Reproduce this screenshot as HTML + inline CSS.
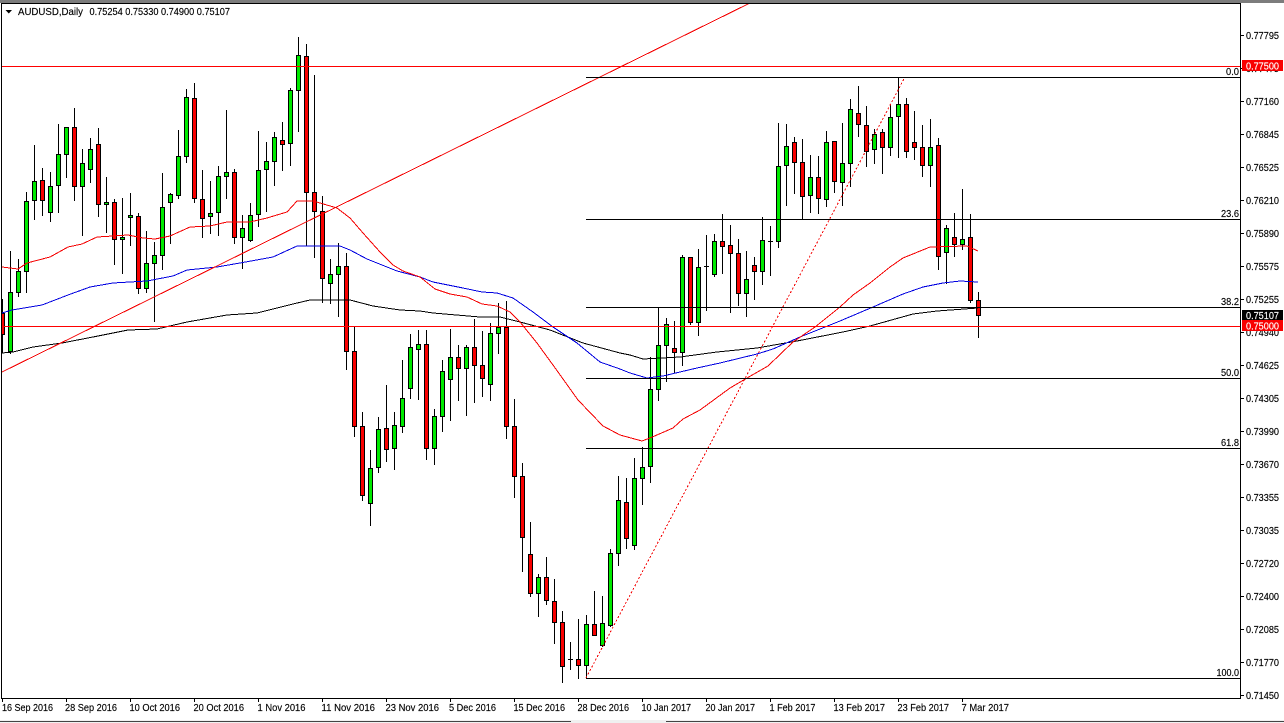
<!DOCTYPE html>
<html><head><meta charset="utf-8"><title>AUDUSD,Daily</title>
<style>html,body{margin:0;padding:0;background:#fff;width:1284px;height:723px;overflow:hidden}svg{display:block}text{font-family:"Liberation Sans",sans-serif;font-size:10.5px;fill:#000;stroke:#000;stroke-width:.15}text.w{fill:#fff;stroke:#fff}</style></head>
<body>
<svg width="1284" height="723" viewBox="0 0 1284 723" xmlns="http://www.w3.org/2000/svg">
<defs><clipPath id="c"><rect x="2" y="4" width="1238" height="694"/></clipPath></defs>
<rect width="1284" height="723" fill="#fff"/>
<rect width="1284" height="3" fill="#7c7c7c"/>
<rect y="720" width="1284" height="3" fill="#f0f0f0"/>
<rect y="721" width="571" height="1" fill="#444"/>
<rect x="666" y="721" width="618" height="1" fill="#444"/>
<g clip-path="url(#c)" shape-rendering="crispEdges">
<path fill="none" stroke="#000" d="M2.5 299V353M10.5 251V354M18.5 259V297M26.5 192V293M34.5 145V220M42.5 168V216M50.5 172V222M58.5 124V213M66.5 127V178M74.5 108V201M82.5 149V236M90.5 138V183M98.5 128V217M106.5 177V233M114.5 199V265M122.5 198V274M130.5 193V246M138.5 213V294M146.5 231V293M154.5 242V322M162.5 173V270M170.5 193V244M178.5 130V199M186.5 89V163M194.5 83V203M202.5 170V238M210.5 181V234M218.5 166V236M226.5 110V199M234.5 169V244M242.5 215V269M250.5 203V242M258.5 131V227M266.5 142V212M274.5 132V186M282.5 122V171M290.5 88V166M298.5 37V132M306.5 44V246M314.5 75V258M322.5 196V303M330.5 259V304M338.5 243V317M346.5 253V370M354.5 327V437M362.5 412V501M370.5 450V526M378.5 417V473M386.5 385V462M394.5 412V470M402.5 360V433M410.5 334V399M418.5 330V400M426.5 330V460M434.5 409V465M442.5 360V432M450.5 329V421M458.5 345V401M466.5 345V416M474.5 319V403M482.5 331V397M490.5 323V401M498.5 303V354M506.5 301V439M514.5 399V498M522.5 463V572M530.5 522V597M538.5 574V617M546.5 557V605M554.5 579V644M562.5 611V683M570.5 642V670M578.5 619V679M586.5 615V679M594.5 591V636M602.5 596V647M610.5 549V627M618.5 476V566M626.5 478V549M634.5 458V550M642.5 447V505M650.5 357V483M658.5 307V401M666.5 318V382M674.5 321V373M682.5 255V366M690.5 257V325M698.5 249V336M706.5 235V311M714.5 234V277M722.5 214V274M730.5 225V313M738.5 239V306M746.5 251V317M754.5 257V300M762.5 217V285M770.5 226V276M778.5 123V248M786.5 124V206M794.5 137V194M802.5 139V219M810.5 155V213M818.5 156V214M826.5 131V207M834.5 141V193M842.5 123V206M850.5 99V187M858.5 86V137M866.5 106V167M874.5 129V164M882.5 129V174M890.5 104V156M898.5 77V158M906.5 98V158M914.5 111V160M922.5 125V177M930.5 119V187M938.5 138V270M946.5 225V284M954.5 213V257M962.5 189V250M970.5 214V303M978.5 292V338M568 659.5h5M704 266.5h5M768 241.5h5"/>
<path fill="#00ea00" stroke="#000" d="M8.5 292.5h4V351.5h-4zM16.5 271.5h4V292.5h-4zM24.5 201.5h4V271.5h-4zM32.5 181.5h4V200.5h-4zM48.5 186.5h4V212.5h-4zM56.5 154.5h4V185.5h-4zM64.5 127.5h4V154.5h-4zM80.5 163.5h4V186.5h-4zM88.5 149.5h4V169.5h-4zM104.5 202.5h4V204.5h-4zM120.5 237.5h4V239.5h-4zM128.5 215.5h4V217.5h-4zM144.5 263.5h4V288.5h-4zM152.5 255.5h4V263.5h-4zM160.5 207.5h4V255.5h-4zM168.5 194.5h4V202.5h-4zM176.5 156.5h4V195.5h-4zM184.5 97.5h4V156.5h-4zM208.5 213.5h4V216.5h-4zM216.5 176.5h4V212.5h-4zM224.5 172.5h4V176.5h-4zM240.5 228.5h4V237.5h-4zM248.5 215.5h4V240.5h-4zM256.5 170.5h4V214.5h-4zM264.5 161.5h4V169.5h-4zM272.5 137.5h4V161.5h-4zM288.5 90.5h4V143.5h-4zM296.5 55.5h4V90.5h-4zM328.5 274.5h4V283.5h-4zM336.5 266.5h4V274.5h-4zM368.5 468.5h4V503.5h-4zM376.5 429.5h4V467.5h-4zM392.5 425.5h4V448.5h-4zM400.5 398.5h4V426.5h-4zM408.5 347.5h4V388.5h-4zM416.5 344.5h4V349.5h-4zM432.5 416.5h4V448.5h-4zM440.5 371.5h4V416.5h-4zM448.5 357.5h4V379.5h-4zM464.5 347.5h4V368.5h-4zM488.5 333.5h4V384.5h-4zM496.5 327.5h4V333.5h-4zM536.5 577.5h4V593.5h-4zM584.5 624.5h4V665.5h-4zM600.5 623.5h4V645.5h-4zM608.5 553.5h4V625.5h-4zM616.5 500.5h4V553.5h-4zM632.5 478.5h4V545.5h-4zM640.5 467.5h4V478.5h-4zM648.5 389.5h4V466.5h-4zM656.5 345.5h4V389.5h-4zM664.5 324.5h4V345.5h-4zM680.5 257.5h4V352.5h-4zM696.5 267.5h4V322.5h-4zM712.5 241.5h4V274.5h-4zM744.5 279.5h4V293.5h-4zM760.5 240.5h4V271.5h-4zM776.5 166.5h4V241.5h-4zM784.5 146.5h4V165.5h-4zM808.5 177.5h4V195.5h-4zM824.5 142.5h4V199.5h-4zM840.5 163.5h4V182.5h-4zM848.5 109.5h4V163.5h-4zM872.5 134.5h4V149.5h-4zM888.5 117.5h4V147.5h-4zM896.5 104.5h4V116.5h-4zM928.5 147.5h4V165.5h-4zM944.5 228.5h4V252.5h-4zM960.5 239.5h4V244.5h-4z"/>
<path fill="#f80000" stroke="#000" d="M.5 313.5h4V334.5h-4zM40.5 180.5h4V200.5h-4zM72.5 127.5h4V186.5h-4zM96.5 144.5h4V204.5h-4zM112.5 202.5h4V239.5h-4zM136.5 216.5h4V288.5h-4zM192.5 98.5h4V198.5h-4zM200.5 199.5h4V218.5h-4zM232.5 172.5h4V237.5h-4zM280.5 140.5h4V144.5h-4zM304.5 56.5h4V192.5h-4zM312.5 192.5h4V211.5h-4zM320.5 211.5h4V278.5h-4zM344.5 266.5h4V351.5h-4zM352.5 351.5h4V426.5h-4zM360.5 426.5h4V495.5h-4zM384.5 428.5h4V449.5h-4zM424.5 344.5h4V448.5h-4zM456.5 357.5h4V368.5h-4zM472.5 347.5h4V365.5h-4zM480.5 365.5h4V378.5h-4zM504.5 327.5h4V426.5h-4zM512.5 426.5h4V476.5h-4zM520.5 476.5h4V537.5h-4zM528.5 554.5h4V593.5h-4zM544.5 577.5h4V600.5h-4zM552.5 601.5h4V622.5h-4zM560.5 622.5h4V666.5h-4zM576.5 659.5h4V665.5h-4zM592.5 624.5h4V635.5h-4zM624.5 502.5h4V538.5h-4zM672.5 348.5h4V352.5h-4zM688.5 257.5h4V322.5h-4zM720.5 241.5h4V246.5h-4zM728.5 245.5h4V253.5h-4zM736.5 253.5h4V293.5h-4zM752.5 265.5h4V271.5h-4zM792.5 142.5h4V162.5h-4zM800.5 162.5h4V196.5h-4zM816.5 177.5h4V198.5h-4zM832.5 141.5h4V181.5h-4zM856.5 113.5h4V124.5h-4zM864.5 125.5h4V151.5h-4zM880.5 132.5h4V147.5h-4zM904.5 104.5h4V151.5h-4zM912.5 142.5h4V147.5h-4zM920.5 147.5h4V165.5h-4zM936.5 145.5h4V256.5h-4zM952.5 237.5h4V244.5h-4zM968.5 237.5h4V300.5h-4zM976.5 300.5h4V315.5h-4z"/>
<polyline fill="none" stroke="#000" points="2,353 13,352 33,347 62,343 93,337 128,330 157,329 187,322 227,315 257,313 293,304 310,300 350,300 373,306 400,310 420,311 433,313 480,317 500,317 520,322 550,330 583,343 620,353 630,355 643,359 680,357 717,352 757,348 797,341 843,332 870,326 913,314 937,311 978,308"/>
<polyline fill="none" stroke="#0000e0" points="2,313 12,310 42,305 68,295 90,287 113,283 147,281 173,276 187,270 217,267 240,263 273,257 297,246 340,246 350,250 367,259 397,271 420,277 433,282 463,288 482,292 497,293 513,298 533,312 553,327 577,343 600,362 620,369 630,373 647,378 663,376 697,368 720,363 757,354 773,349 800,337 840,321 873,307 903,294 923,287 943,283 960,281 978,282"/>
<polyline fill="none" stroke="#f40000" points="2,267 18,269 27,263 50,257 68,247 82,244 97,237 113,236 128,235 143,238 155,239 170,236 190,227 210,226 227,222 250,222 267,218 287,212 297,201 313,201 320,203 337,208 350,218 363,233 380,252 393,265 403,271 420,277 435,289 450,294 467,297 482,304 497,306 510,312 520,322 537,343 553,365 578,400 603,426 620,435 642,441 650,438 673,428 683,419 700,410 715,399 730,388 747,378 768,366 793,342 815,327 840,307 853,295 870,283 890,267 903,258 930,247 967,246 978,251"/>
<line x1="0" y1="373" x2="750" y2="3" stroke="#f40000"/>
<line x1="586" y1="678" x2="905" y2="77" stroke="#f40000" stroke-dasharray="2 2"/>
<path fill="none" stroke="#000" d="M586 77.5H1240M586 219.5H1240M586 307.5H1240M586 378.5H1240M586 448.5H1240M586 678.5H1240"/>
<path fill="none" stroke="#ff0000" d="M2 66.5H1240M2 326.5H1240"/>
</g>
<g shape-rendering="crispEdges">
<rect x="1.5" y="3.5" width="1239" height="695" fill="none" stroke="#000"/>
<path fill="none" stroke="#000" d="M1241 35.5h3M1241 68.5h3M1241 101.5h3M1241 134.5h3M1241 167.5h3M1241 200.5h3M1241 233.5h3M1241 266.5h3M1241 299.5h3M1241 332.5h3M1241 365.5h3M1241 398.5h3M1241 431.5h3M1241 464.5h3M1241 497.5h3M1241 530.5h3M1241 563.5h3M1241 596.5h3M1241 629.5h3M1241 662.5h3M1241 695.5h3M2.5 699v3M66.5 699v3M130.5 699v3M194.5 699v3M258.5 699v3M322.5 699v3M386.5 699v3M450.5 699v3M514.5 699v3M578.5 699v3M642.5 699v3M706.5 699v3M770.5 699v3M834.5 699v3M898.5 699v3M962.5 699v3"/>
</g>
<path d="M5.5 10h6.5l-3.2 3.5z" fill="#000"/>
<text x="18" y="15" textLength="65" lengthAdjust="spacingAndGlyphs">AUDUSD,Daily</text>
<text x="89.5" y="15" textLength="140.5" lengthAdjust="spacingAndGlyphs">0.75254 0.75330 0.74900 0.75107</text>
<g>
<text x="1246" y="39" textLength="33" lengthAdjust="spacingAndGlyphs">0.77795</text>
<text x="1246" y="72" textLength="33" lengthAdjust="spacingAndGlyphs">0.77475</text>
<text x="1246" y="105" textLength="33" lengthAdjust="spacingAndGlyphs">0.77160</text>
<text x="1246" y="138" textLength="33" lengthAdjust="spacingAndGlyphs">0.76845</text>
<text x="1246" y="171" textLength="33" lengthAdjust="spacingAndGlyphs">0.76525</text>
<text x="1246" y="204" textLength="33" lengthAdjust="spacingAndGlyphs">0.76210</text>
<text x="1246" y="237" textLength="33" lengthAdjust="spacingAndGlyphs">0.75890</text>
<text x="1246" y="270" textLength="33" lengthAdjust="spacingAndGlyphs">0.75575</text>
<text x="1246" y="303" textLength="33" lengthAdjust="spacingAndGlyphs">0.75255</text>
<text x="1246" y="336" textLength="33" lengthAdjust="spacingAndGlyphs">0.74940</text>
<text x="1246" y="369" textLength="33" lengthAdjust="spacingAndGlyphs">0.74625</text>
<text x="1246" y="402" textLength="33" lengthAdjust="spacingAndGlyphs">0.74305</text>
<text x="1246" y="435" textLength="33" lengthAdjust="spacingAndGlyphs">0.73990</text>
<text x="1246" y="468" textLength="33" lengthAdjust="spacingAndGlyphs">0.73670</text>
<text x="1246" y="501" textLength="33" lengthAdjust="spacingAndGlyphs">0.73355</text>
<text x="1246" y="534" textLength="33" lengthAdjust="spacingAndGlyphs">0.73035</text>
<text x="1246" y="567" textLength="33" lengthAdjust="spacingAndGlyphs">0.72720</text>
<text x="1246" y="600" textLength="33" lengthAdjust="spacingAndGlyphs">0.72400</text>
<text x="1246" y="633" textLength="33" lengthAdjust="spacingAndGlyphs">0.72085</text>
<text x="1246" y="666" textLength="33" lengthAdjust="spacingAndGlyphs">0.71770</text>
<text x="1246" y="699" textLength="33" lengthAdjust="spacingAndGlyphs">0.71450</text>
</g>
<rect x="1242" y="60" width="41" height="11" fill="#f80000"/>
<rect x="1242" y="310" width="41" height="10" fill="#000"/>
<rect x="1242" y="320" width="41" height="11" fill="#f80000"/>
<text class="w" x="1246" y="69.5" textLength="33" lengthAdjust="spacingAndGlyphs">0.77500</text>
<text class="w" x="1246" y="319" textLength="33" lengthAdjust="spacingAndGlyphs">0.75107</text>
<text class="w" x="1246" y="329.5" textLength="33" lengthAdjust="spacingAndGlyphs">0.75000</text>
<g>
<text x="1226" y="75" textLength="13" lengthAdjust="spacingAndGlyphs">0.0</text>
<text x="1221" y="217" textLength="18" lengthAdjust="spacingAndGlyphs">23.6</text>
<text x="1221" y="305" textLength="18" lengthAdjust="spacingAndGlyphs">38.2</text>
<text x="1221" y="376" textLength="18" lengthAdjust="spacingAndGlyphs">50.0</text>
<text x="1221" y="446" textLength="18" lengthAdjust="spacingAndGlyphs">61.8</text>
<text x="1216.5" y="676" textLength="22.5" lengthAdjust="spacingAndGlyphs">100.0</text>
</g>
<g>
<text x="2" y="711" textLength="51" lengthAdjust="spacingAndGlyphs">16 Sep 2016</text>
<text x="65" y="711" textLength="52" lengthAdjust="spacingAndGlyphs">28 Sep 2016</text>
<text x="129.5" y="711" textLength="50.5" lengthAdjust="spacingAndGlyphs">10 Oct 2016</text>
<text x="193.5" y="711" textLength="50.5" lengthAdjust="spacingAndGlyphs">20 Oct 2016</text>
<text x="257.5" y="711" textLength="48" lengthAdjust="spacingAndGlyphs">1 Nov 2016</text>
<text x="321.5" y="711" textLength="53.5" lengthAdjust="spacingAndGlyphs">11 Nov 2016</text>
<text x="385.5" y="711" textLength="53.5" lengthAdjust="spacingAndGlyphs">23 Nov 2016</text>
<text x="449" y="711" textLength="47" lengthAdjust="spacingAndGlyphs">5 Dec 2016</text>
<text x="513.5" y="711" textLength="51.5" lengthAdjust="spacingAndGlyphs">15 Dec 2016</text>
<text x="577.5" y="711" textLength="51.5" lengthAdjust="spacingAndGlyphs">28 Dec 2016</text>
<text x="641.5" y="711" textLength="49.5" lengthAdjust="spacingAndGlyphs">10 Jan 2017</text>
<text x="705.5" y="711" textLength="49.5" lengthAdjust="spacingAndGlyphs">20 Jan 2017</text>
<text x="769.5" y="711" textLength="46" lengthAdjust="spacingAndGlyphs">1 Feb 2017</text>
<text x="833.5" y="711" textLength="51.5" lengthAdjust="spacingAndGlyphs">13 Feb 2017</text>
<text x="897.5" y="711" textLength="51.5" lengthAdjust="spacingAndGlyphs">23 Feb 2017</text>
<text x="961.5" y="711" textLength="47.5" lengthAdjust="spacingAndGlyphs">7 Mar 2017</text>
</g>
</svg>
</body></html>
